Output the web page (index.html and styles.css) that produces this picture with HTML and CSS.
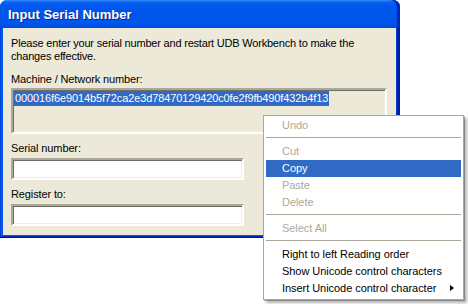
FILE: index.html
```html
<!DOCTYPE html>
<html>
<head>
<meta charset="utf-8">
<link rel="stylesheet" href="styles.css">
</head>
<body>
<div class="window">
  <div class="titlebar"><span class="title">Input Serial Number</span></div>
  <div class="client">
    <p class="intro">Please enter your serial number and restart UDB Workbench to make the changes effective.</p>
    <div class="label label-machine">Machine / Network number:</div>
    <div class="box machine"><span class="sel">000016f6e9014b5f72ca2e3d78470129420c0fe2f9fb490f432b4f13</span></div>
    <div class="label label-serial">Serial number:</div>
    <div class="box field"></div>
    <div class="label label-reg">Register to:</div>
    <div class="box field"></div>
  </div>
</div>
<div class="menu">
  <div class="item disabled">Undo</div>
  <div class="sep"></div>
  <div class="item disabled">Cut</div>
  <div class="item active">Copy</div>
  <div class="item disabled">Paste</div>
  <div class="item disabled">Delete</div>
  <div class="sep"></div>
  <div class="item disabled">Select All</div>
  <div class="sep"></div>
  <div class="item">Right to left Reading order</div>
  <div class="item">Show Unicode control characters</div>
  <div class="item sub">Insert Unicode control character<span class="arrow"></span></div>
</div>
</body>
</html>
```

FILE: styles.css
```css
html, body {
  margin: 0;
  padding: 0;
  background: #ffffff;
}
body {
  width: 468px;
  height: 304px;
  position: relative;
  overflow: hidden;
  font-family: "Liberation Sans", Arial, sans-serif;
  font-size: 11px;
  color: #000;
}
.window {
  width: 400px;
  height: 238px;
  display: flex;
  flex-direction: column;
  border-radius: 7px 7px 0 0;
  background: linear-gradient(to right, #0042d8 0, #0058ee 2px, #0058ee 396px, #0024b0 397px, #001a98 400px);
  box-sizing: border-box;
  padding: 0 4px 3px 3px;
  box-shadow: inset 0 -1px 0 #001280, inset 0 -2px 0 #0030c0;
}
.titlebar {
  height: 28px;
  margin: 0 -4px 0 -3px;
  padding-left: 8px;
  border-radius: 7px 7px 0 0;
  background: linear-gradient(to bottom, #3b8cf8 0, #0a64f0 2px, #0058ee 5px, #0055ea 14px, #0057ee 22px, #0050e4 26px, #0046d8 28px);
  display: flex;
  align-items: center;
  box-shadow: inset -3px 0 0 #0028b8;
}
.title {
  font-family: "Liberation Sans", Arial, sans-serif;
  font-weight: bold;
  font-size: 13px;
  color: #fff;
  text-shadow: 1px 1px 0 #0a1e8c;
  margin-top: 1px;
}
.client {
  flex: 1;
  background: #ece9d8;
  padding: 9px 0 0 8px;
  display: flex;
  flex-direction: column;
  align-items: flex-start;
  letter-spacing: -0.12px;
}
.intro {
  margin: 0;
  line-height: 13px;
  width: 380px;
  letter-spacing: -0.2px;
}
.label {
  line-height: 13px;
}
.label-machine { margin-top: 10px; }
.label-serial { margin-top: 8px; }
.label-reg { margin-top: 8px; }
.box {
  box-sizing: border-box;
  border-style: solid;
  border-width: 2px;
  border-color: #aca899 #ffffff #ffffff #aca899;
  box-shadow: inset 1px 1px 0 #716f64, inset -1px -1px 0 #f1efe2;
}
.machine {
  margin-top: 2px;
  width: 376px;
  height: 46px;
  background: #ece9d8;
  padding: 1px 0 0 1px;
  line-height: 15px;
}
.sel {
  background: #316ac5;
  color: #fff;
  display: inline-block;
  padding: 0 1px;
}
.field {
  margin-top: 3px;
  width: 233px;
  height: 22px;
  background: #fff;
}
.menu {
  position: absolute;
  left: 263px;
  top: 115px;
  width: 201px;
  box-sizing: border-box;
  background: #fff;
  border: 1px solid #aca899;
  padding: 1px 2px 2px 2px;
  box-shadow: 1px 1px 0 rgba(0,0,0,0.25), 3px 3px 3px rgba(0,0,0,0.3);
  letter-spacing: -0.05px;
}
.item {
  height: 17px;
  line-height: 17px;
  padding-left: 16px;
  white-space: nowrap;
  position: relative;
}
.item.disabled { color: #aca899; }
.item.active { background: #316ac5; color: #fff; }
.sep {
  height: 1px;
  background: #aca899;
  margin: 3px 0 5px;
}
.arrow {
  position: absolute;
  right: 7px;
  top: 5px;
  width: 0;
  height: 0;
  border-style: solid;
  border-width: 3.5px 0 3.5px 4px;
  border-color: transparent transparent transparent #000;
}
```
